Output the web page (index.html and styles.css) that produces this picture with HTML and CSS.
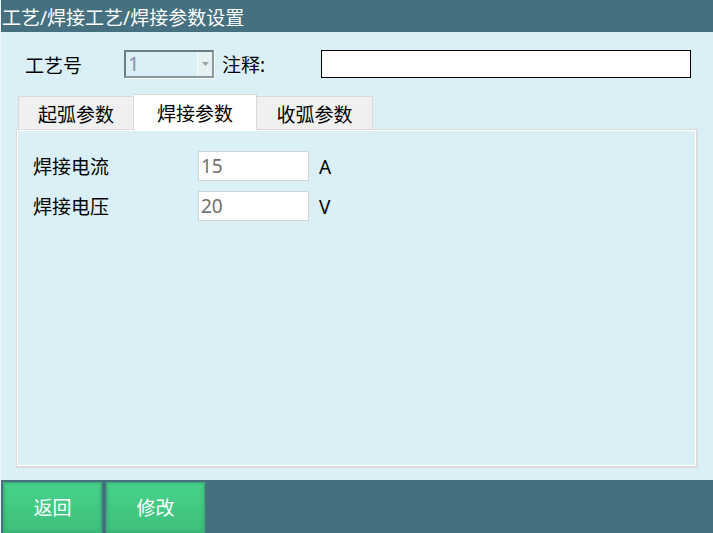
FILE: index.html
```html
<!DOCTYPE html>
<html lang="zh-CN">

<head>
    <meta charset="UTF-8">
    <meta name="viewport" content="width=device-width, initial-scale=1.0">
    <title>焊接参数设置</title>

    <link rel="stylesheet" href="styles.css">
</head>

<body>

    <header class="title">工艺/焊接工艺/焊接参数设置</header>

    <main>
        <div class="head-row">
            <span class="head-label">工艺号</span>
            <div class="combo">
                <span class="combo-value">1</span>
                <span class="combo-btn">
                    <svg width="7" height="4" viewBox="0 0 7 4"><path d="M0 0H7L3.5 4Z" fill="#9aa3a6" /></svg>
                </span>
            </div>
            <span class="note-label">注释:</span>
            <input type="text" class="note-input">
        </div>

        <div class="tabs">
            <div class="tab">起弧参数</div>
            <div class="tab active">焊接参数</div>
            <div class="tab">收弧参数</div>
        </div>

        <div class="panel">
            <div class="field">
                <span class="field-label">焊接电流</span>
                <input type="text" class="field-input" value="15">
                <span class="field-unit">A</span>
            </div>
            <div class="field">
                <span class="field-label">焊接电压</span>
                <input type="text" class="field-input" value="20">
                <span class="field-unit">V</span>
            </div>
        </div>
    </main>

    <footer class="bar">
        <button class="btn">返回</button>
        <button class="btn">修改</button>
    </footer>

</body>

</html>
```

FILE: styles.css
```css
* {
    box-sizing: border-box;
    padding: 0;
    margin: 0;
}

body {
    width: 713px;
    height: 533px;
    background: #daf0f6;
    font-family: "Noto Sans", "Noto Sans CJK SC", sans-serif;
    font-size: 19px;
    color: #000;
    display: flex;
    flex-direction: column;
    overflow: hidden;
    border-left: 1px solid #eef6f8;
}

/* Title bar */
.title {
    flex-shrink: 0;
    height: 32px;
    background: #44707f;
    color: #fff;
    line-height: 36px;
    padding-left: 1px;
    white-space: nowrap;
    overflow: hidden;
}

main {
    flex: 1;
    padding: 18px 15px 12px 15px;
    display: flex;
    flex-direction: column;
}

/* Top row */
.head-row {
    display: flex;
    align-items: center;
    height: 28px;
    flex-shrink: 0;
}

.head-label {
    width: 108px;
    padding-left: 9px;
    line-height: 28px;
    margin-top: 3px;
}

.combo {
    width: 90px;
    height: 28px;
    border: 2px solid #6e7e83;
    border-right-color: #8c9a9e;
    border-bottom-color: #8c9a9e;
    display: flex;
    justify-content: space-between;
    background: #daf0f6;
    box-shadow: 1px 1px 0 #f4fafc;
}

.combo-value {
    color: #8a8db4;
    padding-left: 2px;
    line-height: 24px;
    font-size: 20px;
}

.combo-btn {
    width: 15px;
    background: #e6f1f4;
    border-left: 1px solid #f8fbfc;
    display: flex;
    align-items: center;
    justify-content: center;
}

.note-label {
    margin-left: 8px;
    width: 99px;
    line-height: 28px;
    margin-top: 1px;
}

.note-input {
    width: 370px;
    height: 28px;
    border: 1px solid #000;
    background: #fff;
    outline: none;
}

/* Tabs */
.tabs {
    display: flex;
    align-items: flex-end;
    margin-top: 16px;
    padding-left: 2px;
    height: 35px;
    flex-shrink: 0;
    position: relative;
    z-index: 1;
}

.tab {
    width: 116px;
    height: 33px;
    background: #f0f0f0;
    border: 1px solid #d9d9d9;
    border-bottom: none;
    text-align: center;
    line-height: 37px;
}

.tab + .tab {
    border-left: none;
}

.tab.active {
    width: 123px;
    height: 36px;
    background: #fff;
    border-color: #d9d9d9;
    line-height: 39px;
    margin-bottom: -1px;
}

/* Panel */
.panel {
    height: 339px;
    flex-shrink: 0;
    width: 682px;
    border: 1px solid #dcdcdc;
    border-right-width: 2px;
    border-bottom-width: 2px;
    box-shadow: inset 1px 1px 0 #fff, inset -1px -1px 0 #fff;
    padding: 21px 0 0 16px;
    display: flex;
    flex-direction: column;
    gap: 10px;
}

.field {
    display: flex;
    align-items: center;
    height: 30px;
}

.field-label {
    width: 165px;
    line-height: 30px;
    margin-top: 2px;
}

.field-input {
    width: 111px;
    height: 30px;
    border: 1px solid #cfd4d6;
    background: #fff;
    color: #6f6f6f;
    font-family: "Noto Sans", sans-serif;
    font-size: 19px;
    padding-left: 2px;
    outline: none;
}

.field-unit {
    margin-left: 10px;
    font-family: "Noto Sans", sans-serif;
    font-size: 19px;
    margin-top: 2px;
}

/* Bottom bar */
.bar {
    flex-shrink: 0;
    height: 53px;
    background: #44707f;
    display: flex;
    padding: 2px 0 0 2px;
    gap: 4px;
}

.btn {
    width: 99px;
    height: 51px;
    border: none;
    background: linear-gradient(#47d38b, #3fbf7c);
    box-shadow: inset 0 0 0 1px #3eae74, inset 0 0 3px 2px rgba(40, 140, 90, 0.35);
    color: #fff;
    font-family: "Noto Sans CJK SC", sans-serif;
    font-size: 19px;
    line-height: 49px;
    padding-bottom: 2px;
}
```
